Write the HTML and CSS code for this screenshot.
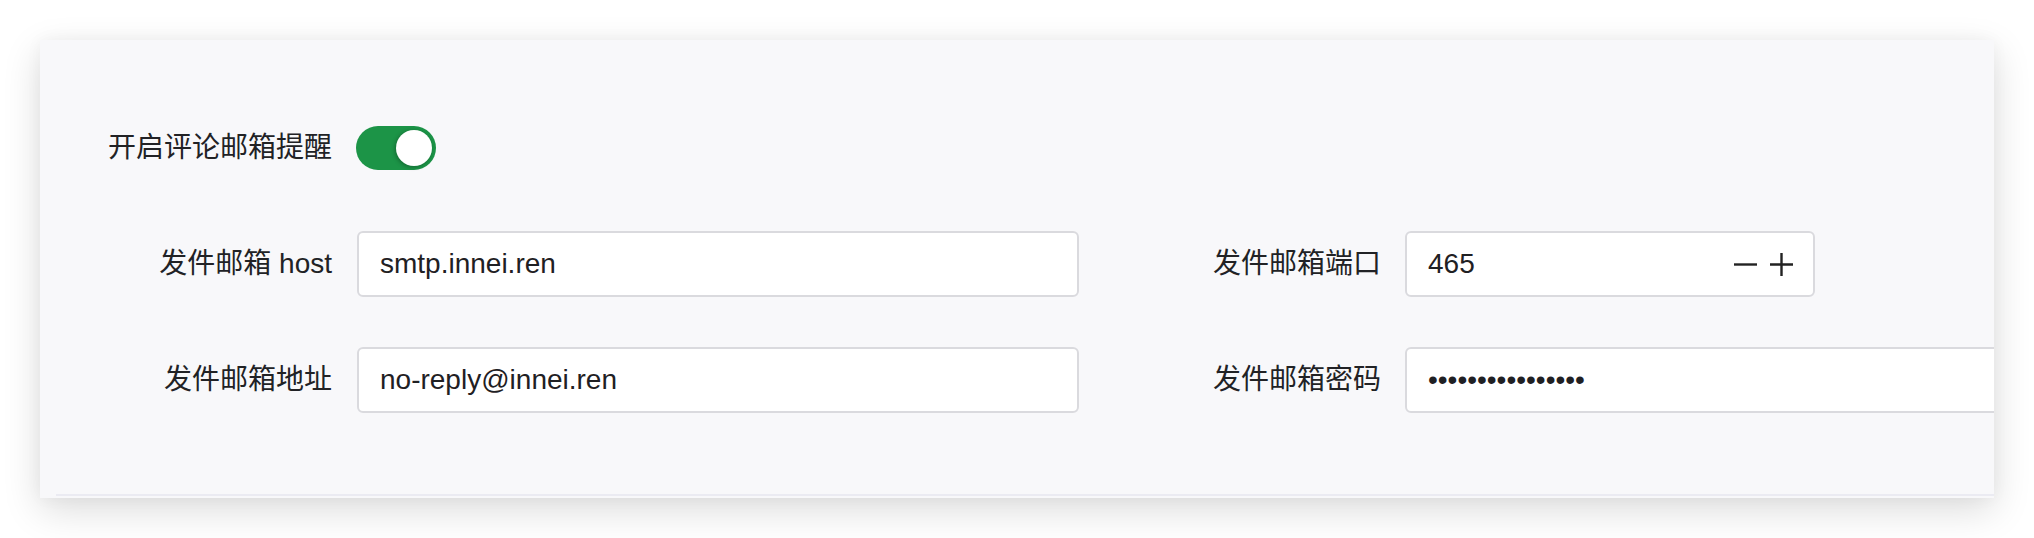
FILE: index.html
```html
<!DOCTYPE html>
<html lang="zh-CN">
<head>
<meta charset="utf-8">
<title>邮箱设置</title>
<link rel="stylesheet" href="styles.css">
</head>
<body>
<div class="card">
  <div class="toggle-row">
    <span class="label">开启评论邮箱提醒</span>
    <span class="switch"><span class="knob"></span></span>
  </div>
  <div class="rows">
    <div class="row">
      <div class="field">
        <label class="label">发件邮箱 host</label>
        <div class="input wide"><span class="value">smtp.innei.ren</span></div>
      </div>
      <div class="field">
        <label class="label">发件邮箱端口</label>
        <div class="input num">
          <span class="value">465</span>
          <span class="ctrls">
            <svg width="23" height="23" viewBox="0 0 23 23"><path d="M0 11.5H23" stroke="#222" stroke-width="2.4" fill="none"/></svg>
            <svg width="23" height="23" viewBox="0 0 23 23"><path d="M0 11.5H23M11.5 0V23" stroke="#222" stroke-width="2.4" fill="none"/></svg>
          </span>
        </div>
      </div>
    </div>
    <div class="row">
      <div class="field">
        <label class="label">发件邮箱地址</label>
        <div class="input wide"><span class="value">no-reply@innei.ren</span></div>
      </div>
      <div class="field">
        <label class="label">发件邮箱密码</label>
        <div class="input wide"><span class="value dots">••••••••••••••••</span></div>
      </div>
    </div>
  </div>
  <div class="bottom-line"></div>
</div>
</body>
</html>
```

FILE: styles.css
```css
html, body {
  margin: 0;
  background: #ffffff;
}
body {
  padding: 40px;
  font-family: "Liberation Sans", "Noto Sans CJK SC", sans-serif;
  font-size: 28px;
  color: #212225;
}
.card {
  height: 458px;
  box-sizing: border-box;
  background: #f8f8fa;
  overflow: hidden;
  padding: 86px 0 0 52px;
  display: flex;
  flex-direction: column;
  box-shadow: 0 12px 36px rgba(0, 0, 0, 0.14), 0 0 16px rgba(0, 0, 0, 0.04);
}
.toggle-row {
  display: flex;
  align-items: center;
  gap: 24px;
  height: 44px;
}
.label {
  width: 240px;
  flex: 0 0 240px;
  text-align: right;
  white-space: nowrap;
  line-height: 1;
}
.switch {
  width: 80px;
  height: 44px;
  border-radius: 22px;
  background: #1c9447;
  display: flex;
  align-items: center;
  justify-content: flex-end;
  padding-right: 4px;
  box-sizing: border-box;
}
.knob {
  width: 36px;
  height: 36px;
  border-radius: 50%;
  background: #ffffff;
  box-shadow: -1px 1px 4px rgba(0, 0, 0, 0.3);
}
.rows {
  margin-top: 61px;
  display: flex;
  flex-direction: column;
  gap: 50px;
}
.row {
  display: flex;
  gap: 62px;
  height: 66px;
}
.field {
  display: flex;
  align-items: center;
  gap: 25px;
  flex: 0 0 auto;
}
.field + .field {
  gap: 24px;
}
.input {
  height: 66px;
  box-sizing: border-box;
  border: 2px solid #dadade;
  border-radius: 6px;
  background: #ffffff;
  display: flex;
  align-items: center;
  padding: 0 21px;
  flex: 0 0 auto;
}
.wide {
  width: 722px;
}
.num {
  width: 410px;
  justify-content: space-between;
  padding-right: 20px;
}
.value {
  color: #1f2023;
  white-space: nowrap;
}
.dots {
  font-size: 28px;
  letter-spacing: 0;
}
.ctrls {
  display: flex;
  gap: 13px;
  align-items: center;
}
.ctrls svg {
  display: block;
}
.bottom-line {
  margin-top: auto;
  margin-left: -36px;
  margin-bottom: 2px;
  height: 2px;
  background: #ebebf2;
}
```
